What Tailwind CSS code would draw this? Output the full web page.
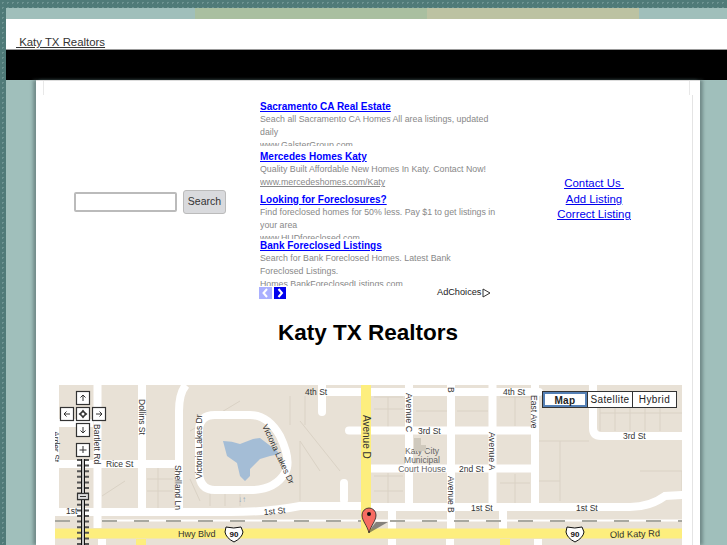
<!DOCTYPE html>
<html lang="en">
<head>
<meta charset="utf-8">
<title>Katy TX Realtors</title>
<script src="https://cdn.jsdelivr.net/npm/@tailwindcss/browser@4"></script>
</head>
<body class="h-[545px] overflow-hidden bg-[#4f7a78] bg-[radial-gradient(#6d9391_1px,transparent_1px)] bg-[length:5px_5px] font-['Liberation_Sans',sans-serif]">
<div class="ml-[6px] pt-[8px]">
  <div class="flex h-[11px]">
    <div class="w-[189px] bg-[#a0bfbb]"></div>
    <div class="w-[232px] bg-[#a9bfa0]"></div>
    <div class="w-[212px] bg-[#bcc2a2]"></div>
    <div class="flex-1 bg-[#a0bfbb]"></div>
  </div>
  <div class="h-[30px] bg-white pl-[10px] pt-[16px] text-[11.4px] leading-[14px] text-[#333]"><a href="#" class="underline">&nbsp;Katy TX Realtors</a></div>
  <div class="h-[31px] border-t border-[#999] bg-black"></div>
  <div class="h-[465px] bg-[#a0bfbb] pl-[30px]">
    <div class="relative h-[465px] w-[664px] border-t border-[#ddd] bg-white shadow-[-3px_0_3px_rgba(80,100,100,0.55),3px_0_3px_rgba(80,100,100,0.55)]">
      <div class="absolute top-0 left-[7px] h-[14px] w-px bg-[#e8e8e8]"></div>
      <div class="absolute top-0 left-[653px] h-[14px] w-px bg-[#e8e8e8]"></div>
      <div class="absolute top-[14px] bottom-0 left-[656px] w-px bg-[#e4e4e4]"></div>
      <div class="mt-[19px] flex h-[199px]">
        <div class="flex w-[224px] items-center gap-[6px] pt-[4px] pl-[38px]">
          <input aria-label="Search" class="h-[20px] w-[103px] rounded-[2px] border-2 border-[#bbb] bg-white">
          <button class="h-[24px] w-[43px] rounded-[3px] border border-[#bbb] bg-[#d9dadd] text-[10.5px] text-[#333]">Search</button>
        </div>
        <div class="w-[236px]">
          <div class="h-[46px] overflow-hidden text-[8.8px] leading-[13px] text-[#888]">
            <a href="#" class="block text-[10px] leading-[13px] font-bold text-[#00f] underline">Sacramento CA Real Estate</a>
            <p>Seach all Sacramento CA Homes All area listings, updated daily</p>
            <p>www.GalsterGroup.com</p>
          </div>
          <div class="mt-[4px] h-[43px] overflow-hidden text-[8.8px] leading-[13px] text-[#888]">
            <a href="#" class="block text-[10px] leading-[13px] font-bold text-[#00f] underline">Mercedes Homes Katy</a>
            <p>Quality Built Affordable New Homes In Katy. Contact Now!</p>
            <p class="underline">www.mercedeshomes.com/Katy</p>
          </div>
          <div class="h-[46px] overflow-hidden text-[8.8px] leading-[13px] text-[#888]">
            <a href="#" class="block text-[10px] leading-[13px] font-bold text-[#00f] underline">Looking for Foreclosures?</a>
            <p>Find foreclosed homes for 50% less. Pay $1 to get listings in your area</p>
            <p>www.HUDforeclosed.com</p>
          </div>
          <div class="h-[47px] overflow-hidden text-[8.8px] leading-[13px] text-[#888]">
            <a href="#" class="block text-[10px] leading-[13px] font-bold text-[#00f] underline">Bank Foreclosed Listings</a>
            <p>Search for Bank Foreclosed Homes. Latest Bank Foreclosed Listings.</p>
            <p>Homes.BankForeclosedListings.com</p>
          </div>
          <div class="flex h-[13px] items-center">
            <svg width="13" height="12" viewBox="0 0 13 12" class="-ml-[1px]"><rect width="13" height="12" fill="#aab0ff"/><path d="M8 2 4.5 6 8 10" fill="none" stroke="#fff" stroke-width="2"/></svg>
            <svg width="12" height="12" viewBox="0 0 12 12" class="ml-[2px]"><rect width="12" height="12" fill="#0000ee"/><path d="M4.5 2 8 6 4.5 10" fill="none" stroke="#fff" stroke-width="2"/></svg>
            <span class="ml-[151px] text-[9.2px] text-[#222]">AdChoices</span>
            <svg width="9" height="10" viewBox="0 0 9 10" class="ml-[1px]"><path d="M1 1 8 5 1 9Z" fill="#fff" stroke="#333"/></svg>
          </div>
        </div>
        <div class="flex w-[196px] flex-col items-center justify-center text-[11.4px] leading-[15.5px] text-[#00e] underline">
          <a href="#">Contact Us&nbsp;</a>
          <a href="#">Add Listing</a>
          <a href="#">Correct Listing</a>
        </div>
      </div>
      <h1 class="mt-[19px] text-center text-[22.5px] leading-[30px] font-bold text-black">Katy TX Realtors</h1>
      <div class="relative mt-[37px] ml-[19px] h-[161px] w-[627px] overflow-hidden">
        <svg width="627" height="161" viewBox="55 384 627 161" class="block" font-family="Liberation Sans, sans-serif" font-size="8.5" fill="#333">
          <rect x="55" y="384" width="627" height="161" fill="#e8e1d6"/>
          <path d="M147 478H173M147 490H173M158 467V507M102 495 125 480M190 430 240 400M300 420 340 470M190 478 200 500M210 489V505M225 489V505M240 489V505M374 408H403M374 396H403M388 396V426M416 410H447M374 475H403M374 490H403M388 472V502M500 396H531M515 396V425M457 410H488M500 482H530M515 473V502M600 396V430M615 396V430M630 396V430M645 396V430M660 396V430M600 412H682M539 440H589M560 440V500M539 480H560M640 470H682V490M290 395V424M305 395V424M320 470 300 440 300 500" fill="none" stroke="#dad2c5" stroke-width="1"/>
          <path d="M55 384V510M97.500 384V527M142 384V507M59 422H93M55 463H183M179 507V410Q179 392 186 384M409 384V502M451 384V528M492.500 384V502M535 384V502M392 510V528M503 510V528M392 538V545M450 538V545M538 538V545M102 538V545" fill="none" stroke="#fff" stroke-width="8"/>
          <path d="M322 384V411M322 391H539M349 429.500H535M371 467.500H535M344 482V499M593 384V427Q593 435 601 435H682M55 511H230Q270 511 300 505H360M371 506H630Q650 506 665 495L682 494" fill="none" stroke="#fff" stroke-width="8" stroke-linecap="round"/>
          <path d="M199 445V430Q199 414 215 414H250Q268 414 280 435 292 460 285 472 275 489 250 489H215Q199 489 199 470Z" fill="none" stroke="#fff" stroke-width="8"/>
          <path d="M223 440Q232 440 240 443L253 438 260 437 277 450 280 453 270 455 260 458 250 468 250 475 245 480 240 475 237 462 227 455Z" fill="#a4bdd6"/>
          <path d="M102 519.500H682" stroke="#fff" stroke-width="2"/>
          <path d="M102 520H682M55 520H70" stroke="#a8a8a0" stroke-width="2" stroke-dasharray="15 17"/>
          <path d="M55 532.500H682" stroke="#fdee7e" stroke-width="10"/>
          <path d="M366 384V528M141 538V545M505 538V545" stroke="#fdee7e" stroke-width="10"/>
          <text x="238" y="501" font-size="8" fill="#8fa8c0">↓↑</text>
          <text x="305" y="394">4th St</text>
          <text x="503" y="394">4th St</text>
          <text x="106" y="466">Rice St</text>
          <text x="66" y="513">1st</text>
          <text x="264" y="514" transform="rotate(-5 264 514)">1st St</text>
          <text x="471" y="510">1st St</text>
          <text x="576" y="510">1st St</text>
          <text x="418" y="433">3rd St</text>
          <text x="623" y="438">3rd St</text>
          <text x="459" y="471">2nd St</text>
          <text x="178" y="536" font-size="9">Hwy Blvd</text>
          <text x="610" y="537" font-size="9.300" transform="rotate(-2 610 537)">Old Katy Rd</text>
          <text transform="translate(139 398) rotate(90)">Dollins St</text>
          <text transform="translate(94 423) rotate(90)">Bartlett Rd</text>
          <text transform="translate(175 464) rotate(90)">Shelland Ln</text>
          <text transform="translate(202 478) rotate(-90)">Victoria Lakes Dr</text>
          <text transform="translate(262 425) rotate(65)">Victoria Lakes Dr</text>
          <text transform="translate(363 414) rotate(90)" font-size="10">Avenue D</text>
          <text transform="translate(406 392) rotate(90)" font-size="9">Avenue C</text>
          <text transform="translate(448 475) rotate(90)" font-size="8.500">Avenue B</text>
          <text transform="translate(448 355) rotate(90)" font-size="8.500">Avenue B</text>
          <text transform="translate(489 431) rotate(90)" font-size="9">Avenue A</text>
          <text transform="translate(531 394) rotate(90)">East Ave</text>
          <text transform="translate(53 430) rotate(90)">Arder St</text>
          <g fill="#666" text-anchor="middle">
            <text x="422" y="453">Katy City</text>
            <text x="422" y="462">Municipal</text>
            <text x="422" y="471">Court House</text>
          </g>
          <path d="M414 437H421V444H426V450H414Z" fill="#cfc9bd"/>
          <path d="M226 526Q234 528 241 526L243 531Q242 537 234 541 226 537 225 531Z" fill="#fff" stroke="#111"/>
          <text x="234" y="536" text-anchor="middle" font-size="8" font-weight="700" fill="#111">90</text>
          <path d="M567 526Q575 528 582 526L584 531Q583 537 575 541 567 537 566 531Z" fill="#fff" stroke="#111"/>
          <text x="575" y="536" text-anchor="middle" font-size="8" font-weight="700" fill="#111">90</text>
          <path d="M369 532 388 521H376L372 526Z" fill="#333" opacity=".55"/>
          <path d="M369 532C367 524 362 520 362 514A7 7 0 0 1 376 514C376 520 371 524 369 532Z" fill="#f76c62" stroke="#222" stroke-width=".8"/>
          <circle cx="369" cy="513" r="2" fill="#111"/>
          <path d="M83 458V545" stroke="#555" stroke-width="12" stroke-dasharray="2 3.6"/>
          <path d="M83 458V545" stroke="#111" stroke-width="4"/>
          <path d="M83 458V545" stroke="#fff" stroke-width="1.5"/>
          <g fill="#fff" stroke="#333" stroke-width="1.2">
            <rect x="76.500" y="390.500" width="13" height="13"/>
            <rect x="60.500" y="406.500" width="13" height="13"/>
            <rect x="76.500" y="406.500" width="13" height="13"/>
            <rect x="92.500" y="406.500" width="13" height="13"/>
            <rect x="76.500" y="422.500" width="13" height="13"/>
            <rect x="76.500" y="442.500" width="13" height="13"/>
            <rect x="77.500" y="492.500" width="11" height="6" fill="#ddd"/>
          </g>
          <path d="M83 400V394M80.500 396.500 83 394 85.500 396.500M64 413H70M66.500 410.500 64 413 66.500 415.500M96 413H102M99.500 410.500 102 413 99.500 415.500M83 426V432M80.500 429.500 83 432 85.500 429.500M83 445V452M79.500 449H86.500M80 495.500H86" fill="none" stroke="#333"/>
          <path d="M83 408.500 85 411 87.500 413 85 415 83 417.500 81 415 78.500 413 81 411Z" fill="#333"/>
          <circle cx="83" cy="413" r="1.500" fill="#fff"/>
        </svg>
        <div class="absolute top-[6px] left-[487px] flex h-[17px] w-[135px] border border-[#333] bg-white text-[10px] leading-[15px] tracking-[0.4px] text-[#222]">
          <span class="w-[44px] border-2 border-[#5580b5] text-center leading-[13px] font-bold">Map</span>
          <span class="w-[45px] border-l border-[#333] text-center">Satellite</span>
          <span class="flex-1 border-l border-[#333] text-center">Hybrid</span>
        </div>
      </div>
    </div>
  </div>
</div>
</body>
</html>
